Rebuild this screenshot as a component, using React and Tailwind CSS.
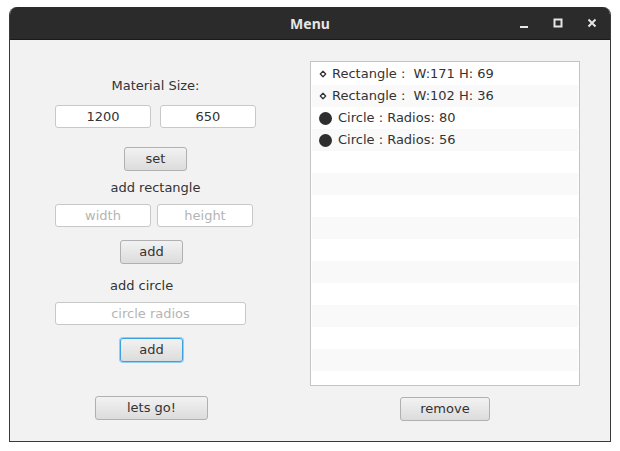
import React from 'react';

const items = [
  { kind: 'rect', text: 'Rectangle :  W:171 H: 69' },
  { kind: 'rect', text: 'Rectangle :  W:102 H: 36' },
  { kind: 'circle', text: 'Circle : Radios: 80' },
  { kind: 'circle', text: 'Circle : Radios: 56' },
];

const font = { fontFamily: '"DejaVu Sans", "Liberation Sans", sans-serif' };

function Field({ value, placeholder, className }) {
  return (
    <div
      className={`h-[23px] rounded-[3px] border border-[#c8c8c8] bg-white flex items-center justify-center text-[13px] ${className}`}
    >
      {value ? (
        <span className="text-[#333]">{value}</span>
      ) : (
        <span className="text-[#b4b4b4]">{placeholder}</span>
      )}
    </div>
  );
}

function Btn({ children, className = '', focused }) {
  return (
    <button
      className={`h-[24px] rounded-[3px] border text-[13px] text-[#333] bg-gradient-to-b from-[#f2f2f2] to-[#dcdcdc] flex items-center justify-center ${
        focused ? 'border-[#3aa0e0] shadow-[0_0_0_1px_#8fd0f5]' : 'border-[#b0b0b0]'
      } ${className}`}
    >
      {children}
    </button>
  );
}

export default function App() {
  return (
    <div className="w-[620px] h-[451px] bg-white pt-[7px] pl-[9px]" style={font}>
      <div className="w-[602px] h-[435px] flex flex-col rounded-t-[8px] overflow-hidden border-x border-b border-[#3a3a3a]">
        {/* title bar */}
        <div className="h-[33px] bg-[#2b2b2b] relative flex items-center justify-center border-b border-[#1a1a1a]">
          <span className="text-[14px] font-bold text-[#e6e6e6]" style={{ fontFamily: '"Noto Sans", sans-serif' }}>
            Menu
          </span>
          <div className="absolute right-[13px] top-0 h-full flex items-center gap-[24px]">
            <svg width="10" height="10" viewBox="0 0 10 10">
              <rect x="1" y="8" width="8" height="2" fill="#e6e6e6" />
            </svg>
            <svg width="10" height="10" viewBox="0 0 10 10">
              <rect x="1.5" y="1.5" width="7" height="7" fill="none" stroke="#e6e6e6" strokeWidth="2" />
            </svg>
            <svg width="10" height="10" viewBox="0 0 10 10">
              <path d="M1.5 1.5 L8.5 8.5 M8.5 1.5 L1.5 8.5" stroke="#e6e6e6" strokeWidth="2" />
            </svg>
          </div>
        </div>

        {/* content */}
        <div className="flex-1 bg-[#f2f2f2] flex">
          {/* left */}
          <div className="w-[290px] pl-[45px] flex flex-col">
            <div className="w-[201px] flex flex-col items-center">
              <div className="mt-[38px] text-[13px] text-[#333] leading-[16px]">Material Size:</div>
              <div className="mt-[11px] w-full flex justify-between">
                <Field value="1200" className="w-[96px]" />
                <Field value="650" className="w-[96px]" />
              </div>
              <Btn className="mt-[19px] w-[63px]">set</Btn>
              <div className="mt-[9px] text-[13px] text-[#333] leading-[16px]">add rectangle</div>
              <div className="mt-[8px] w-full flex">
                <Field placeholder="width" className="w-[96px]" />
                <Field placeholder="height" className="w-[96px] ml-[6px]" />
              </div>
            </div>
            <Btn className="mt-[13px] ml-[65px] w-[63px]">add</Btn>
            <div className="ml-[55px] mt-[14px] text-[13px] text-[#333] leading-[16px]">add circle</div>
            <Field placeholder="circle radios" className="mt-[8px] w-[191px]" />
            <Btn focused className="mt-[13px] ml-[65px] w-[63px]">add</Btn>
            <Btn className="mt-[34px] ml-[40px] w-[113px]">lets go!</Btn>
          </div>

          {/* right */}
          <div className="flex flex-col items-center pl-[10px]">
            <div className="mt-[21px] w-[270px] h-[325px] border border-[#c4c4c4] bg-white p-px overflow-hidden">
              {Array.from({ length: 15 }).map((_, i) => {
                const it = items[i];
                return (
                  <div
                    key={i}
                    className={`h-[22px] flex items-center pl-[7px] text-[13px] text-[#333] whitespace-pre ${
                      i % 2 ? 'bg-[#f9f9f9]' : 'bg-white'
                    }`}
                  >
                    {it &&
                      (it.kind === 'rect' ? (
                        <>
                          <svg width="8" height="8" viewBox="0 0 8 8" className="mr-[5px]">
                            <path d="M4 1.3 L6.7 4 L4 6.7 L1.3 4 Z" fill="none" stroke="#333" strokeWidth="1.3" strokeLinejoin="round" />
                          </svg>
                          <span>{it.text}</span>
                        </>
                      ) : (
                        <>
                          <span className="w-[13px] h-[13px] rounded-full bg-[#2e2e2e] mr-[6px]" />
                          <span>{it.text}</span>
                        </>
                      ))}
                  </div>
                );
              })}
            </div>
            <Btn className="mt-[11px] w-[90px]">remove</Btn>
          </div>
        </div>
      </div>
    </div>
  );
}
